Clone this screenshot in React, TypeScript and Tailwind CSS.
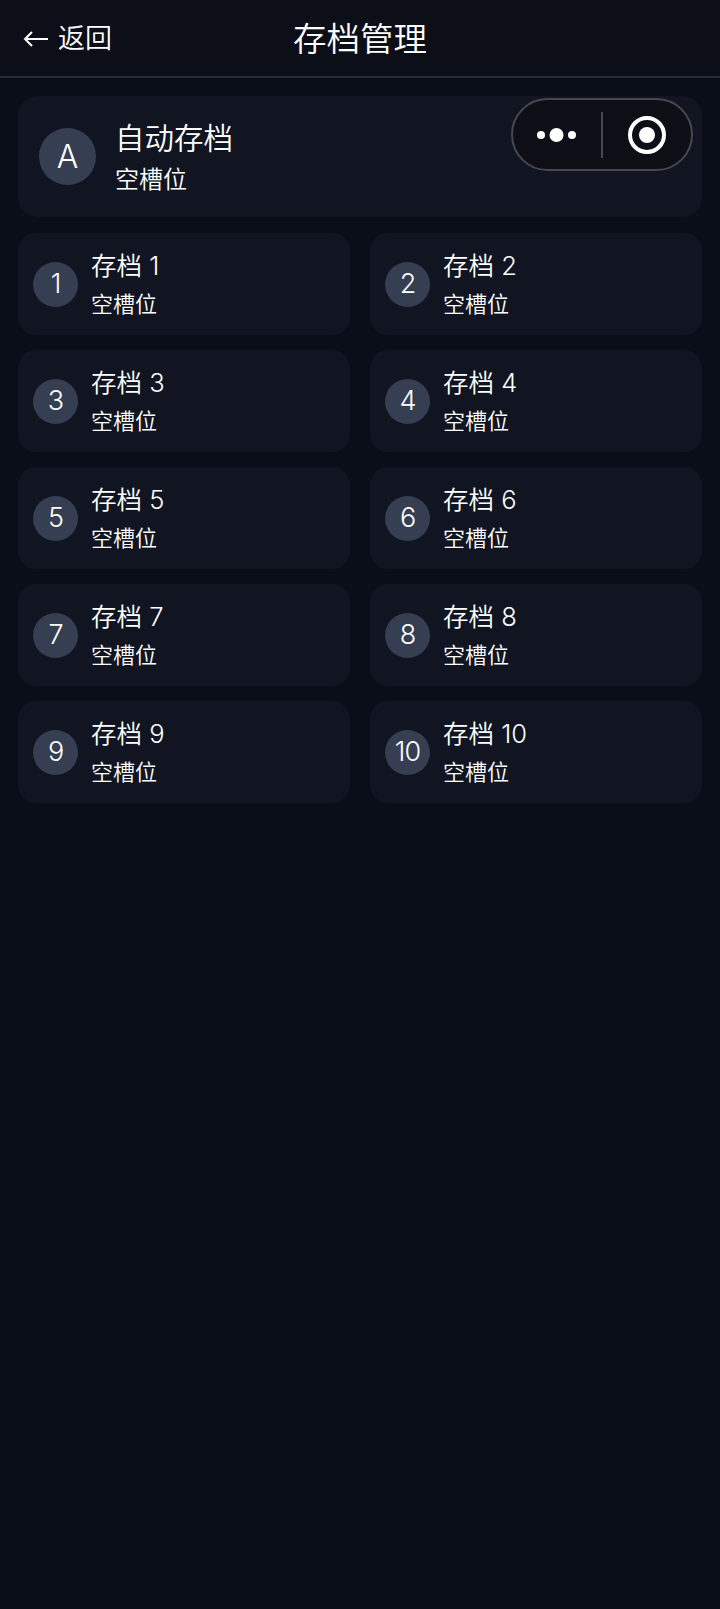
const FONT = "font-['Inter','Noto_Sans_CJK_SC',sans-serif]";

function Slot({ n }: { n: number }) {
  return (
    <div className="flex h-[102px] items-center rounded-[18px] bg-[#101521] pl-[15px]">
      <div className="flex h-[45px] w-[45px] shrink-0 items-center justify-center rounded-full bg-[#363e52] text-[27px] font-[350] tracking-[-1px] text-white">
        {n}
      </div>
      <div className="ml-[13px] flex flex-col pt-[2px]">
        <div className="text-[25.5px] leading-[38px] font-[350] text-white">存档 {n}</div>
        <div className="text-[22px] leading-[38px] font-[350] text-white">空槽位</div>
      </div>
    </div>
  );
}

export default function App() {
  return (
    <div className={`relative min-h-[1609px] bg-[#0a0e18] ${FONT}`}>
      <header className="relative flex h-[78px] items-center justify-center border-b-2 border-[#262b3a] bg-[#0c0e18]">
        <div className="absolute left-[22px] top-[19px] flex items-center gap-[8px] text-white">
          <svg width="28" height="20" viewBox="0 0 28 20" fill="none" stroke="currentColor" strokeWidth="2">
            <path d="M26 10H3M10 3 3 10l7 7" />
          </svg>
          <span className="text-[27px] leading-[40px] font-[350]">返回</span>
        </div>
        <h1 className="pt-[2px] text-[33.5px] leading-[50px] font-[350] text-white">存档管理</h1>
      </header>

      <main className="flex flex-col gap-[16px] px-[18px] pt-[18px]">
        <div className="flex h-[121px] items-center rounded-[20px] bg-[#101521] pl-[21px]">
          <div className="flex h-[57px] w-[57px] shrink-0 items-center justify-center rounded-full bg-[#363e52] text-[32px] font-[350] text-white">
            A
          </div>
          <div className="ml-[19px] flex flex-col pt-[2px]">
            <div className="text-[29.5px] leading-[44px] font-[350] text-white">自动存档</div>
            <div className="text-[24px] leading-[40px] font-[350] text-white">空槽位</div>
          </div>
        </div>

        <div className="grid grid-cols-2 gap-x-[20px] gap-y-[15px]">
          {[1, 2, 3, 4, 5, 6, 7, 8, 9, 10].map((n) => (
            <Slot key={n} n={n} />
          ))}
        </div>
      </main>

      <div className="absolute left-[511px] top-[98px] flex h-[73px] w-[182px] items-center rounded-full border-2 border-[#46474f] bg-[#0d0e16]">
        <div className="flex w-[88px] items-center justify-center">
          <svg width="40" height="14" viewBox="0 0 40 14" fill="white">
            <circle cx="4" cy="7" r="4" />
            <circle cx="19.5" cy="7" r="7" />
            <circle cx="35" cy="7" r="4" />
          </svg>
        </div>
        <div className="h-[46px] w-[2px] bg-[#46474f]" />
        <div className="flex flex-1 items-center justify-center">
          <svg width="38" height="38" viewBox="0 0 38 38" fill="none">
            <circle cx="19" cy="19" r="17" stroke="white" strokeWidth="4" />
            <circle cx="19" cy="19" r="8" fill="white" />
          </svg>
        </div>
      </div>
    </div>
  );
}
